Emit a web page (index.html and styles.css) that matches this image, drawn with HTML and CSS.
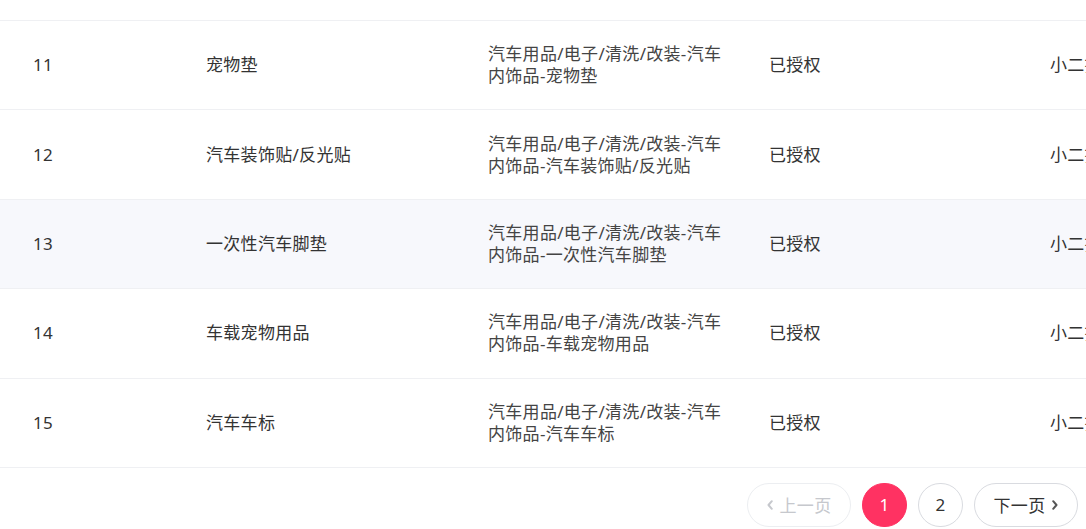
FILE: index.html
```html
<!DOCTYPE html>
<html lang="zh-CN">
<head>
<meta charset="utf-8">
<title>授权类目</title>
<link rel="stylesheet" href="styles.css">
</head>
<body>
<div class="page">
  <div class="table">
    <div class="row row-tail"></div>
    <div class="row">
      <div class="cell">11</div>
      <div class="cell">宠物垫</div>
      <div class="cell cat">汽车用品/电子/清洗/改装-汽车内饰品-宠物垫</div>
      <div class="cell">已授权</div>
      <div class="cell">小二操作</div>
    </div>
    <div class="row">
      <div class="cell">12</div>
      <div class="cell">汽车装饰贴/反光贴</div>
      <div class="cell cat">汽车用品/电子/清洗/改装-汽车内饰品-汽车装饰贴/反光贴</div>
      <div class="cell">已授权</div>
      <div class="cell">小二操作</div>
    </div>
    <div class="row hover">
      <div class="cell">13</div>
      <div class="cell">一次性汽车脚垫</div>
      <div class="cell cat">汽车用品/电子/清洗/改装-汽车内饰品-一次性汽车脚垫</div>
      <div class="cell">已授权</div>
      <div class="cell">小二操作</div>
    </div>
    <div class="row">
      <div class="cell">14</div>
      <div class="cell">车载宠物用品</div>
      <div class="cell cat">汽车用品/电子/清洗/改装-汽车内饰品-车载宠物用品</div>
      <div class="cell">已授权</div>
      <div class="cell">小二操作</div>
    </div>
    <div class="row">
      <div class="cell">15</div>
      <div class="cell">汽车车标</div>
      <div class="cell cat">汽车用品/电子/清洗/改装-汽车内饰品-汽车车标</div>
      <div class="cell">已授权</div>
      <div class="cell">小二操作</div>
    </div>
  </div>
  <div class="pager">
    <button class="pg pg-text disabled">
      <svg class="chev" viewBox="0 0 6 10" width="6" height="10"><path d="M4.8 1.2 1.5 5l3.3 3.8" fill="none" stroke="currentColor" stroke-width="2" stroke-linecap="round" stroke-linejoin="round"/></svg>
      <span>上一页</span>
    </button>
    <button class="pg pg-num active">1</button>
    <button class="pg pg-num">2</button>
    <button class="pg pg-text">
      <span>下一页</span>
      <svg class="chev" viewBox="0 0 6 10" width="6" height="10"><path d="M1.2 1.2 4.5 5 1.2 8.8" fill="none" stroke="currentColor" stroke-width="2" stroke-linecap="round" stroke-linejoin="round"/></svg>
    </button>
  </div>
</div>
</body>
</html>
```

FILE: styles.css
```css
html, body {
  margin: 0;
  padding: 0;
  background: #fff;
  overflow: hidden;
}

body {
  font-family: "Noto Sans", "Noto Sans CJK SC", sans-serif;
  font-size: 17px;
  letter-spacing: 0.3px;
  color: #333;
}

.page {
  width: 1086px;
  height: 529px;
  overflow: hidden;
}

.table {
  width: 1200px;
}

.row {
  display: grid;
  grid-template-columns: 173px 282px 281px 281px 183px;
  padding-left: 33px;
  height: 89.4px;
  align-items: center;
  border-bottom: 1px solid #eff0f3;
  box-sizing: border-box;
  line-height: 22px;
}

.row-tail {
  height: 21px;
}

.row.hover {
  background: #f7f8fc;
}

.cell {
  white-space: nowrap;
}

.cell.cat {
  white-space: normal;
  width: 245px;
  color: #444;
}

.pager {
  display: flex;
  justify-content: flex-end;
  gap: 11px;
  padding: 15px 8px 0 0;
}

.pg {
  height: 44px;
  box-sizing: border-box;
  border: 1px solid #d9dbe0;
  background: #fff;
  border-radius: 22px;
  font-family: inherit;
  font-size: 17px;
  letter-spacing: 0.3px;
  color: #333;
  display: flex;
  align-items: center;
  justify-content: center;
  padding: 0;
}

.pg-num {
  width: 45px;
}

.pg-text {
  width: 104px;
  gap: 7px;
}

.pg.active {
  background: #ff3262;
  border-color: #ff3262;
  color: #fff;
}

.pg.disabled {
  color: #c6c8cd;
  border-color: #eceef1;
}

.chev {
  display: block;
  color: #555;
}

.disabled .chev {
  color: #c6c8cd;
}
```
